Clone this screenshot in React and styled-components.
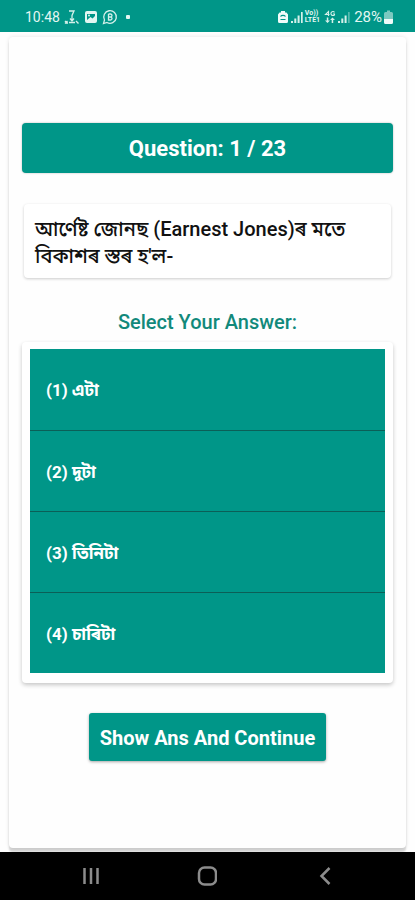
import React, { useState } from "react";

// styles
import styled, { createGlobalStyle } from "styled-components";

const options = ["(1) এটা", "(2) দুটা", "(3) তিনিটা", "(4) চাৰিটা"];

const App = () => {
  const [selected, setSelected] = useState(null);

  return (
    <>
      <GlobalStyle />
      <Screen>
        <StatusBar>
          <StatusGroup>
            <span>10:48</span>
            <DownloadIcon />
            <GalleryIcon />
            <WhatsappIcon />
            <Dot />
          </StatusGroup>
          <StatusGroup $end>
            <RecycleIcon />
            <SignalIcon />
            <Network>
              <span>Vo))</span>
              <span>LTE1</span>
            </Network>
            <DataIcon />
            <SignalIcon $weak />
            <Percent>28%</Percent>
            <BatteryIcon />
          </StatusGroup>
        </StatusBar>

        <Main>
          <Card>
            <Counter>Question: 1 / 23</Counter>
            <Question lang="as">
              আৰ্ণেষ্ট জোনছ (Earnest Jones)ৰ মতে বিকাশৰ স্তৰ হ'ল-
            </Question>
            <Prompt>Select Your Answer:</Prompt>
            <Options>
              {options.map((item) => (
                <Option
                  key={item}
                  type="button"
                  lang="as"
                  aria-pressed={selected === item}
                  onClick={() => setSelected(item)}
                >
                  {item}
                </Option>
              ))}
            </Options>
            <Continue type="button">Show Ans And Continue</Continue>
          </Card>
        </Main>

        <NavBar>
          <NavButton type="button" aria-label="Recent apps">
            <svg width="20" height="20" viewBox="0 0 20 20">
              <path d="M3.500 2v16M10 2v16M16.500 2v16" />
            </svg>
          </NavButton>
          <NavButton type="button" aria-label="Home">
            <svg width="20" height="20" viewBox="0 0 20 20">
              <rect x="2" y="1.500" width="17" height="17" rx="5.500" />
            </svg>
          </NavButton>
          <NavButton type="button" aria-label="Back">
            <svg width="20" height="20" viewBox="0 0 20 20">
              <path d="M15.500 2L7.500 10l8 8" />
            </svg>
          </NavButton>
        </NavBar>
      </Screen>
    </>
  );
};

const DownloadIcon = () => (
  <svg width="16" height="16" viewBox="0 0 16 16" fill="none" stroke="#d5f0ea">
    <path d="M5 2h5L8 6.500v5M6 9.500l2 2.500 2-2.500" strokeWidth="1.300" />
    <path
      d="M1 12l2.500 2.500M3.500 12L1 14.500M5 13.500h6M12 12l2.500 2.500M2 14h2"
      strokeWidth="1.400"
    />
  </svg>
);

const GalleryIcon = () => (
  <svg width="14" height="14" viewBox="0 0 14 14">
    <rect x="1" y="1" width="12" height="12" rx="2" fill="#e3f6f2" />
    <path d="M3 10V4h8v2L8.500 8.500 6.500 7z" fill="#009688" />
    <circle cx="5" cy="5.500" r="1" fill="#e3f6f2" />
  </svg>
);

const WhatsappIcon = () => (
  <svg width="16" height="16" viewBox="0 0 16 16" fill="none" stroke="#d5f0ea">
    <path
      d="M1.500 14.500l1-3.500A6.300 6.300 0 1 1 5 13.500z"
      strokeWidth="1.300"
    />
    <path
      d="M6.500 5v6H8.500a1.500 1.500 0 0 0 0-3H6.500M8.500 8a1.500 1.500 0 0 0 0-3H6.500"
      strokeWidth="1.300"
    />
  </svg>
);

const RecycleIcon = () => (
  <svg width="12" height="14" viewBox="0 0 12 14">
    <path
      d="M4 1h4v1.500h1.500L11 4.500V11.500a1.500 1.500 0 0 1-1.500 1.500h-7A1.500 1.500 0 0 1 1 11.500V4.500l1.500-2H4z"
      fill="#f0fbf9"
    />
    <path
      d="M3.500 6.500a2.800 2 0 0 1 5 0M3.500 9.500h5"
      fill="none"
      stroke="#009688"
      strokeWidth="1.200"
    />
  </svg>
);

const SignalIcon = ({ $weak }) => (
  <svg width="12" height="13" viewBox="0 0 12 13" fill="#d5f0ea">
    <path d="M0 10h2v2H0zM3.300 7.500h2V12h-2zM6.600 4.500h2V12h-2z" />
    <path d="M10 1h1.700v11H10z" opacity={$weak ? 0.4 : 1} />
  </svg>
);

const DataIcon = () => (
  <svg width="12" height="14" viewBox="0 0 12 14" fill="#d5f0ea">
    <path
      d="M4.500 6V1.500L1.500 4.500h4M10.500 2.300a2 2 0 1 0 0 2.500V4H9"
      fill="none"
      stroke="#d5f0ea"
      strokeWidth="1.100"
    />
    <path d="M3.500 13L1 10.500h1.800v-3h1.500v3H6zM8.500 7.500L11 10H9.200v3H7.700v-3H6z" />
  </svg>
);

const BatteryIcon = () => (
  <svg width="9" height="14" viewBox="0 0 9 14">
    <path
      d="M3 0.500h3V2h1.500A1.500 1.500 0 0 1 9 3.500V9H0V3.500A1.500 1.500 0 0 1 1.500 2H3z"
      fill="#7cc9c0"
    />
    <path
      d="M0 9h9v3.500A1.500 1.500 0 0 1 7.500 14h-6A1.500 1.500 0 0 1 0 12.500z"
      fill="#f0fbf9"
    />
  </svg>
);

const GlobalStyle = createGlobalStyle`
  * {
    box-sizing: border-box;
  }
  body {
    margin: 0;
    background: #fefefe;
    font-family: Roboto, "Noto Sans", "Noto Sans Bengali", sans-serif;
  }
  button {
    border: none;
    font-family: inherit;
    cursor: pointer;
  }
`;

const Screen = styled.div`
  min-height: 100vh;
  display: flex;
  flex-direction: column;
`;

const StatusBar = styled.header`
  height: 32px;
  padding: 2px 22px 0 25px;
  display: flex;
  align-items: center;
  justify-content: space-between;
  background: #009688;
  color: #e3f6f2;
  font-size: 14px;
`;

const StatusGroup = styled.div`
  display: flex;
  align-items: center;
  gap: ${({ $end }) => ($end ? 2 : 4)}px;
`;

const Network = styled.span`
  display: flex;
  flex-direction: column;
  margin-right: 2px;
  font-size: 7px;
  line-height: 7px;
  font-weight: 700;
`;

const Percent = styled.span`
  margin-left: 2px;
  font-size: 15px;
`;

const Dot = styled.span`
  width: 4px;
  height: 4px;
  margin-left: 4px;
  border-radius: 1px;
  background: #e3f6f2;
`;

const Main = styled.main`
  flex: 1;
  display: flex;
  padding: 5px 9px 4px;
`;

const Card = styled.section`
  flex: 1;
  display: flex;
  flex-direction: column;
  align-items: center;
  padding: 86px 13px;
  border-radius: 4px;
  background: #fefefe;
  box-shadow: 0 4px 2px rgba(0, 0, 0, 0.16), 0 0 4px rgba(0, 0, 0, 0.1);
`;

const Counter = styled.h1`
  align-self: stretch;
  margin: 0;
  padding: 13px 12px 11px;
  border-radius: 4px;
  background: #009688;
  color: #fff;
  font-size: 22px;
  line-height: 26px;
  font-weight: 700;
  text-align: center;
  box-shadow: 0 0 2px rgba(0, 0, 0, 0.3);
`;

const Question = styled.p`
  align-self: stretch;
  margin: 31px 2px;
  padding: 12px 11px 8px;
  border-radius: 4px;
  background: #fff;
  color: #111;
  font-size: 20px;
  line-height: 27px;
  font-weight: 500;
  box-shadow: 0 1px 3px rgba(0, 0, 0, 0.2);
`;

const Prompt = styled.h2`
  margin: 0 0 6px;
  color: #12897b;
  font-size: 20px;
  line-height: 27px;
  font-weight: 500;
`;

const Options = styled.div`
  align-self: stretch;
  padding: 7px 8px 10px;
  border-radius: 4px;
  background: #fff;
  box-shadow: 0 2px 4px rgba(0, 0, 0, 0.22);
`;

const Option = styled.button`
  display: block;
  width: 100%;
  height: 81px;
  padding: 4px 16px 0;
  background: #009688;
  color: #fff;
  font-size: 17px;
  font-weight: 700;
  text-align: left;

  & + & {
    border-top: 1px solid #0b5f57;
  }
`;

const Continue = styled.button`
  height: 48px;
  margin-top: 30px;
  padding: 2px 11px 0;
  border-radius: 3px;
  background: #009688;
  color: #fff;
  font-size: 20px;
  font-weight: 700;
  box-shadow: 0 1px 3px rgba(0, 0, 0, 0.35);
`;

const NavBar = styled.nav`
  height: 48px;
  padding: 0 33px;
  display: flex;
  background: #000;
`;

const NavButton = styled.button`
  flex: 1;
  display: flex;
  align-items: center;
  justify-content: center;
  background: transparent;

  svg {
    fill: none;
    stroke: #8c8c8c;
    stroke-width: 2.5;
  }
`;

export default App;
